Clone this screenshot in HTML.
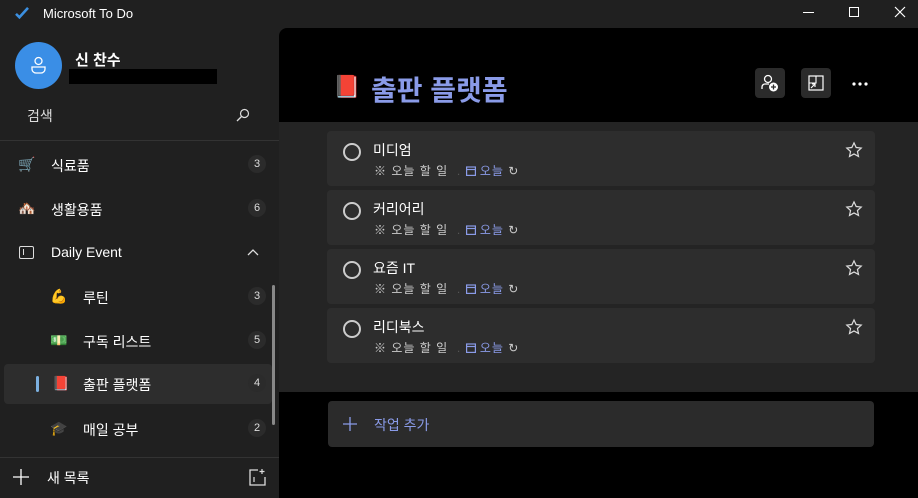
<!DOCTYPE html>
<html><head><meta charset="utf-8"><style>
*{margin:0;padding:0;box-sizing:border-box}
body{width:918px;height:498px;background:#202020;font-family:"Liberation Sans","Noto Sans CJK KR",sans-serif;color:#fff;position:relative;overflow:hidden;font-size:14px}
.a{position:absolute}
.side-item{position:absolute;left:0;width:272px;height:40px}
.side-item .t{position:absolute;top:11px;font-size:14px;color:#fff}
.side-item .n{position:absolute;right:6px;top:10px;width:18px;height:18px;border-radius:9px;background:#2b2b2b;font-size:11px;text-align:center;line-height:18px;color:#ddd}
.side-item .ic{position:absolute;top:11px;font-size:14px}
.card{position:absolute;left:327px;width:548px;height:55px;background:#2d2d2d;border-radius:4px}
.card .c{position:absolute;left:16px;top:12px;width:18px;height:18px;border:2px solid #ccc;border-radius:50%}
.card .tt{position:absolute;left:46px;top:9px;font-size:14px;color:#fff}
.card .m{position:absolute;left:47px;top:31px;font-size:12px;color:#ccc;white-space:nowrap;letter-spacing:1px}
.card .m .b{color:#8a9be8}
.card .s{position:absolute;right:12px;top:10px}
</style></head><body>
<svg class="a" style="left:15px;top:7px" width="14" height="12" viewBox="0 0 16 14"><path d="M1 8l4 4L15 1" stroke="#3b8fe0" stroke-width="3" fill="none"/></svg>
<div class="a" style="left:43px;top:6px;font-size:13px;color:#fff">Microsoft To Do</div>
<div class="a" style="left:803px;top:12px;width:11px;height:1px;background:#fff"></div>
<div class="a" style="left:849px;top:7px;width:10px;height:10px;border:1px solid #fff"></div>
<svg class="a" style="left:894px;top:6px" width="12" height="12"><path d="M1 1l10 10M11 1L1 11" stroke="#fff" stroke-width="1.2"/></svg>

<div class="a" style="left:15px;top:42px;width:47px;height:47px;border-radius:50%;background:#3a8ee6"></div>
<svg class="a" style="left:30px;top:56px" width="17" height="18" viewBox="0 0 17 18"><circle cx="8.5" cy="5" r="3.5" stroke="#fff" stroke-width="1.3" fill="none"/><path d="M2 11h13v2a4 4 0 0 1-4 4H6a4 4 0 0 1-4-4z" stroke="#fff" stroke-width="1.3" fill="none"/></svg>
<div class="a" style="left:75px;top:49px;font-size:15px;font-weight:bold">신 찬수</div>
<div class="a" style="left:69px;top:69px;width:148px;height:15px;background:#000"></div>
<div class="a" style="left:27px;top:106px;font-size:14px;color:#ddd">검색</div>
<svg class="a" style="left:236px;top:108px" width="14" height="14"><circle cx="8.5" cy="5.5" r="4" stroke="#ddd" stroke-width="1.2" fill="none"/><path d="M5.5 8.5L1 13" stroke="#ddd" stroke-width="1.3"/></svg>
<div class="a" style="left:0;top:140px;width:279px;height:1px;background:#333"></div>

<div class="side-item" style="top:145px"><span class="ic" style="left:18px">🛒</span><span class="t" style="left:51px">식료품</span><span class="n">3</span></div>
<div class="side-item" style="top:189px"><span class="ic" style="left:18px">🏘️</span><span class="t" style="left:51px">생활용품</span><span class="n">6</span></div>
<div class="side-item" style="top:233px"><div class="a" style="left:19px;top:13px;width:15px;height:13px;border:1.3px solid #ddd;border-radius:2px"></div><div class="a" style="left:23px;top:16px;width:1.3px;height:6px;background:#ddd"></div><span class="t" style="left:51px">Daily Event</span><svg class="a" style="left:247px;top:15px" width="12" height="8"><path d="M1 7l5-5 5 5" stroke="#ddd" stroke-width="1.3" fill="none"/></svg></div>
<div class="side-item" style="top:277px"><span class="ic" style="left:50px">💪</span><span class="t" style="left:83px">루틴</span><span class="n">3</span></div>
<div class="side-item" style="top:321px"><span class="ic" style="left:50px">💵</span><span class="t" style="left:83px">구독 리스트</span><span class="n">5</span></div>
<div class="side-item" style="top:364px;left:4px;width:268px;background:#2d2d2d;border-radius:4px"><div class="a" style="left:32px;top:12px;width:3px;height:16px;border-radius:2px;background:#7cb0e0"></div><span class="ic" style="left:48px">📕</span><span class="t" style="left:79px">출판 플랫폼</span><span class="n">4</span></div>
<div class="side-item" style="top:409px"><span class="ic" style="left:50px">🎓</span><span class="t" style="left:83px">매일 공부</span><span class="n">2</span></div>
<div class="a" style="left:272px;top:285px;width:3px;height:140px;background:#888;border-radius:2px"></div>
<div class="a" style="left:0;top:457px;width:279px;height:1px;background:#333"></div>
<svg class="a" style="left:13px;top:469px" width="16" height="16"><path d="M8 0v16M0 8h16" stroke="#fff" stroke-width="1.3"/></svg>
<div class="a" style="left:47px;top:468px;font-size:14px">새 목록</div>
<svg class="a" style="left:248px;top:468px" width="18" height="18"><path d="M10 2H2v15h15V9" stroke="#ddd" stroke-width="1.3" fill="none"/><path d="M6 9v5M14 1v5M11.5 3.5h5" stroke="#ddd" stroke-width="1.2"/></svg>

<div class="a" style="left:279px;top:28px;width:639px;height:470px;background:#000;border-top-left-radius:8px"></div>
<div class="a" style="left:279px;top:122px;width:639px;height:270px;background:#242424"></div>
<div class="a" style="left:333px;top:74px;font-size:22px">📕</div>
<div class="a" style="left:371px;top:69px;font-size:28px;font-weight:bold;color:#8a9be8">출판 플랫폼</div>
<div class="a" style="left:755px;top:68px;width:30px;height:30px;background:#2b2b2b;border-radius:4px"></div>
<svg class="a" style="left:760px;top:73px" width="20" height="20"><circle cx="8" cy="6" r="3.5" stroke="#fff" stroke-width="1.3" fill="none"/><path d="M2 16v-2a3 3 0 0 1 3-3h4" stroke="#fff" stroke-width="1.3" fill="none"/><circle cx="13.5" cy="14" r="4.5" fill="#fff"/><path d="M13.5 11.5v5M11 14h5" stroke="#2b2b2b" stroke-width="1.3"/></svg>
<div class="a" style="left:801px;top:68px;width:30px;height:30px;background:#2b2b2b;border-radius:4px"></div>
<svg class="a" style="left:808px;top:75px" width="16" height="16"><rect x="1" y="1" width="14" height="14" stroke="#fff" stroke-width="1.2" fill="none"/><path d="M1 8h7V1M3 13l4-4M4 9h3v3" stroke="#fff" stroke-width="1.1" fill="none"/></svg>
<svg class="a" style="left:852px;top:82px" width="16" height="4"><circle cx="2" cy="2" r="1.6" fill="#fff"/><circle cx="8" cy="2" r="1.6" fill="#fff"/><circle cx="14" cy="2" r="1.6" fill="#fff"/></svg>

<div class="card" style="top:131px"><div class="c"></div><div class="tt">미디엄</div><div class="m">※ 오늘 할 일 &nbsp;<span style="color:#555">.</span> <span class="b"><svg width="10" height="10" style="vertical-align:-1px"><rect x="0.6" y="1" width="8.8" height="8.4" stroke="#8a9be8" fill="none" stroke-width="1.2"/><path d="M0.6 3.5h8.8" stroke="#8a9be8" stroke-width="1.2"/></svg> 오늘</span> ↻</div><svg class="s" width="18" height="18" viewBox="0 0 24 24"><path d="M12 2.5l2.9 6.2 6.7.7-5 4.6 1.4 6.6L12 17.3l-6 3.3 1.4-6.6-5-4.6 6.7-.7z" stroke="#ddd" stroke-width="1.6" fill="none"/></svg></div>
<div class="card" style="top:190px"><div class="c"></div><div class="tt">커리어리</div><div class="m">※ 오늘 할 일 &nbsp;<span style="color:#555">.</span> <span class="b"><svg width="10" height="10" style="vertical-align:-1px"><rect x="0.6" y="1" width="8.8" height="8.4" stroke="#8a9be8" fill="none" stroke-width="1.2"/><path d="M0.6 3.5h8.8" stroke="#8a9be8" stroke-width="1.2"/></svg> 오늘</span> ↻</div><svg class="s" width="18" height="18" viewBox="0 0 24 24"><path d="M12 2.5l2.9 6.2 6.7.7-5 4.6 1.4 6.6L12 17.3l-6 3.3 1.4-6.6-5-4.6 6.7-.7z" stroke="#ddd" stroke-width="1.6" fill="none"/></svg></div>
<div class="card" style="top:249px"><div class="c"></div><div class="tt">요즘 IT</div><div class="m">※ 오늘 할 일 &nbsp;<span style="color:#555">.</span> <span class="b"><svg width="10" height="10" style="vertical-align:-1px"><rect x="0.6" y="1" width="8.8" height="8.4" stroke="#8a9be8" fill="none" stroke-width="1.2"/><path d="M0.6 3.5h8.8" stroke="#8a9be8" stroke-width="1.2"/></svg> 오늘</span> ↻</div><svg class="s" width="18" height="18" viewBox="0 0 24 24"><path d="M12 2.5l2.9 6.2 6.7.7-5 4.6 1.4 6.6L12 17.3l-6 3.3 1.4-6.6-5-4.6 6.7-.7z" stroke="#ddd" stroke-width="1.6" fill="none"/></svg></div>
<div class="card" style="top:308px"><div class="c"></div><div class="tt">리디북스</div><div class="m">※ 오늘 할 일 &nbsp;<span style="color:#555">.</span> <span class="b"><svg width="10" height="10" style="vertical-align:-1px"><rect x="0.6" y="1" width="8.8" height="8.4" stroke="#8a9be8" fill="none" stroke-width="1.2"/><path d="M0.6 3.5h8.8" stroke="#8a9be8" stroke-width="1.2"/></svg> 오늘</span> ↻</div><svg class="s" width="18" height="18" viewBox="0 0 24 24"><path d="M12 2.5l2.9 6.2 6.7.7-5 4.6 1.4 6.6L12 17.3l-6 3.3 1.4-6.6-5-4.6 6.7-.7z" stroke="#ddd" stroke-width="1.6" fill="none"/></svg></div>

<div class="a" style="left:328px;top:401px;width:546px;height:46px;background:#2b2b2b;border-radius:4px"></div>
<svg class="a" style="left:343px;top:417px" width="14" height="14"><path d="M7 0v14M0 7h14" stroke="#8a9be8" stroke-width="1.3"/></svg>
<div class="a" style="left:374px;top:415px;font-size:14px;color:#8a9be8">작업 추가</div>
</body></html>
